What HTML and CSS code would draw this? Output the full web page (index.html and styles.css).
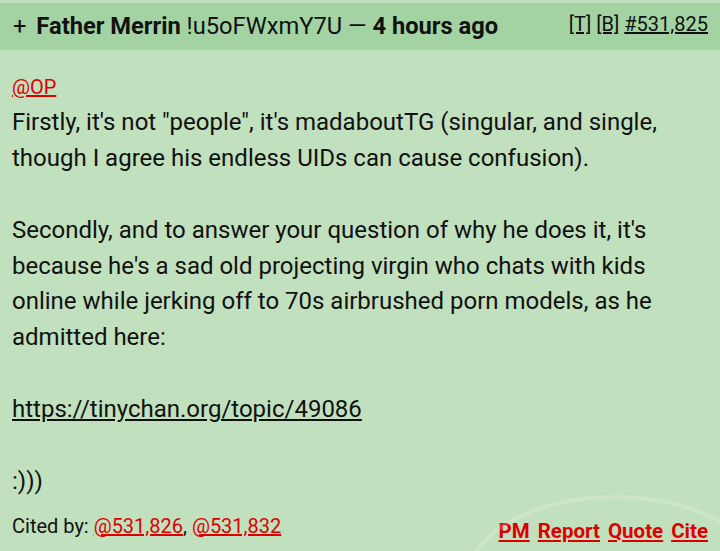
FILE: index.html
```html
<!DOCTYPE html>
<html lang="en">
<head>
    <meta charset="UTF-8">
    <meta name="viewport" content="width=device-width, initial-scale=1.0">
    <title>Reply #531,825</title>
    <link rel="stylesheet" href="styles.css">
</head>
<body>
    <div class="reply">
        <div class="reply-head">
            <div class="reply-who">
                <span class="toggle">+</span>
                <strong class="name">Father Merrin</strong>
                <span class="trip">!u5oFWxmY7U</span>
                <span class="dash">—</span>
                <strong class="time">4 hours ago</strong>
            </div>
            <div class="reply-links">
                <a href="#">[T]</a>
                <a href="#">[B]</a>
                <a href="#">#531,825</a>
            </div>
        </div>

        <div class="reply-body">
            <a class="cite-link" href="#">@OP</a>
            <p>Firstly, it's not "people", it's madaboutTG (singular, and single, though I agree his endless UIDs can cause confusion).</p>
            <p>Secondly, and to answer your question of why he does it, it's because he's a sad old projecting virgin who chats with kids online while jerking off to 70s airbrushed porn models, as he admitted here:</p>
            <p><a class="plain-link" href="#">https://tinychan.org/topic/49086</a></p>
            <p>:)))</p>
        </div>

        <div class="reply-foot">
            <div class="cited-by">
                Cited by: <a class="cite-link" href="#">@531,826</a>, <a class="cite-link" href="#">@531,832</a>
            </div>
            <div class="actions">
                <a href="#">PM</a>
                <a href="#">Report</a>
                <a href="#">Quote</a>
                <a href="#">Cite</a>
            </div>
        </div>

        <!-- tap ripple left over from the screenshot -->
        <div class="ripple"></div>
    </div>
</body>
</html>
```

FILE: styles.css
```css
body {
    margin: 0;
    font-family: Roboto, "Noto Sans", sans-serif;
    background-color: #c1e0bd;
    color: #111;
    overflow: hidden;
}

.reply {
    position: relative;
    height: 551px;
    overflow: hidden;
    padding-top: 3px;
    box-sizing: border-box;
}

.reply-head {
    display: flex;
    justify-content: space-between;
    align-items: flex-start;
    background-color: #a3d3a2;
    height: 47px;
    padding: 0 12px 0 13px;
}

.reply-who {
    font-size: 23.7px;
    line-height: 47px;
    white-space: nowrap;
}

.toggle {
    margin-right: 4px;
}

.name,
.time {
    font-weight: bold;
}

.reply-links {
    font-size: 20px;
    line-height: 42px;
}

.reply-links a {
    color: #111;
}

.reply-body {
    padding: 19px 12px 0 12px;
    font-size: 24px;
    line-height: 35.9px;
}

.reply-body p {
    margin: 0 0 35.9px 0;
}

.reply-body .cite-link {
    font-size: 20px;
    line-height: 26px;
    display: inline-block;
    margin-bottom: 2px;
}

.cite-link {
    color: #dd0000;
}

.plain-link {
    color: #111;
}

.reply-foot {
    display: flex;
    justify-content: space-between;
    align-items: flex-end;
    padding: 0 12px;
    margin-top: -22px;
}

.cited-by {
    font-size: 20px;
    margin-bottom: 5px;
}

.actions a {
    color: #dd0000;
    font-weight: bold;
    font-size: 20.5px;
    margin-left: 4px;
}

.ripple {
    position: absolute;
    left: 466px;
    top: 495px;
    width: 290px;
    height: 160px;
    border: 4px solid rgba(255, 255, 255, 0.18);
    border-radius: 50%;
    pointer-events: none;
}
```
